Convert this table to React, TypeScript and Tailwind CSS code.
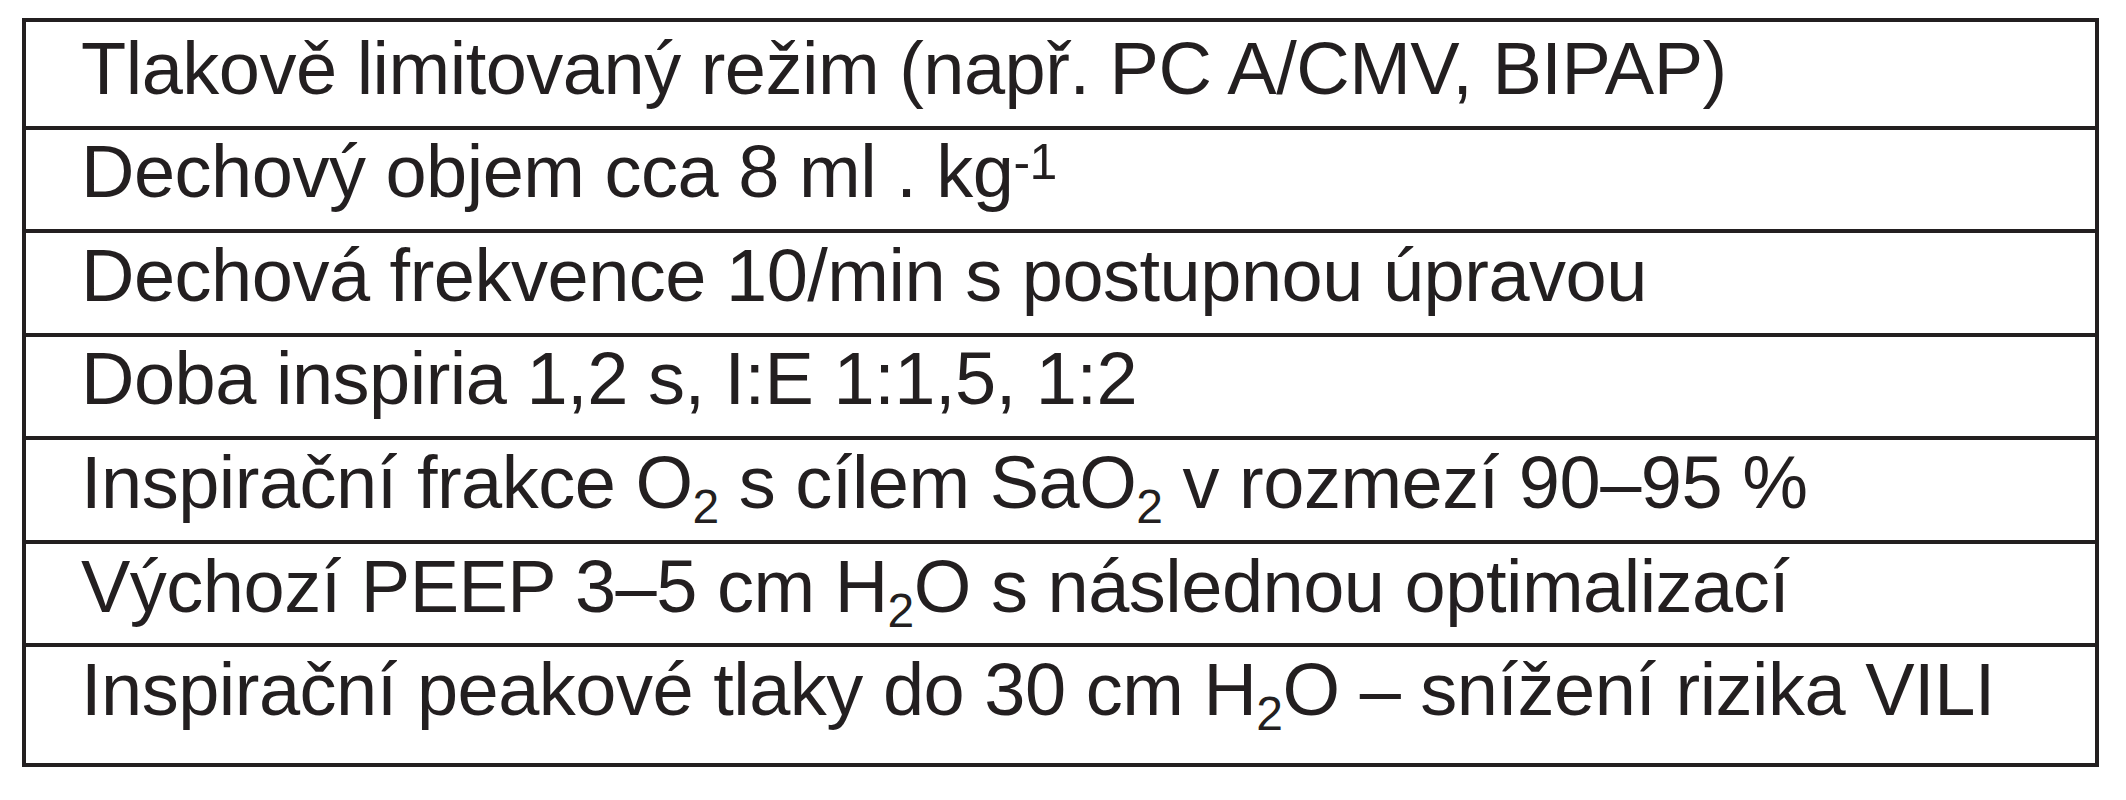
const rows: { h: string; pt: string; content: React.ReactNode }[] = [
  { h: "h-[108px]", pt: "pt-[5px]", content: "Tlakově limitovaný režim (např. PC A/CMV, BIPAP)" },
  {
    h: "h-[103px]",
    pt: "pt-0",
    content: (
      <>
        Dechový objem cca 8 ml . kg<Sup>-1</Sup>
      </>
    ),
  },
  { h: "h-[104px]", pt: "pt-[1px]", content: "Dechová frekvence 10/min s postupnou úpravou" },
  { h: "h-[103px]", pt: "pt-0", content: "Doba inspiria 1,2 s, I:E 1:1,5, 1:2" },
  {
    h: "h-[104px]",
    pt: "pt-[1px]",
    content: (
      <>
        Inspirační frakce O<Sub>2</Sub> s cílem SaO<Sub>2</Sub> v rozmezí 90–95 %
      </>
    ),
  },
  {
    h: "h-[103px]",
    pt: "pt-[1px]",
    content: (
      <>
        Výchozí PEEP 3–5 cm H<Sub>2</Sub>O s následnou optimalizací
      </>
    ),
  },
  {
    h: "h-[116px]",
    pt: "pt-[1px]",
    content: (
      <>
        Inspirační peakové tlaky do 30 cm H<Sub>2</Sub>O – snížení rizika VILI
      </>
    ),
  },
];

function Sup({ children }: { children: React.ReactNode }) {
  return <span className="relative top-[-18px] text-[50px] leading-none">{children}</span>;
}

function Sub({ children }: { children: React.ReactNode }) {
  return <span className="relative top-[15px] text-[48px] leading-none">{children}</span>;
}

export default function App() {
  return (
    <div className="w-[2126px] h-[800px] bg-white pt-[18px] pl-[22px]">
      <div
        className="w-[2077px] border-4 border-[#231f20] text-[#231f20] text-[74px] leading-[84px] tracking-[-0.5px]"
        style={{ fontFamily: '"Liberation Sans", Arial, sans-serif' }}
      >
        {rows.map((row, i) => (
          <div
            key={i}
            className={`${row.h} ${row.pt} pl-[55px] whitespace-nowrap ${
              i < rows.length - 1 ? "border-b-4 border-[#231f20]" : ""
            }`}
          >
            {row.content}
          </div>
        ))}
      </div>
    </div>
  );
}
